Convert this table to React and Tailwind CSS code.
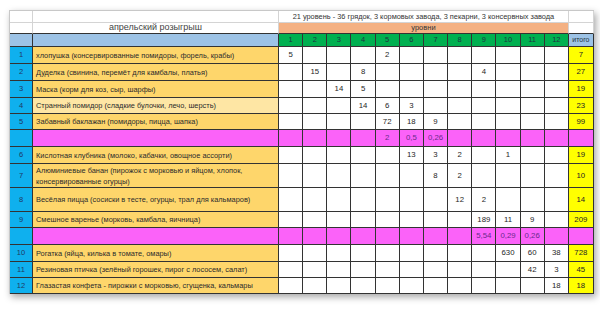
import React from 'react'

const levels = [1, 2, 3, 4, 5, 6, 7, 8, 9, 10, 11, 12]

const rows = [
  { n: 1, name: 'хлопушка (консервированные помидоры, форель, крабы)', v: { 1: '5', 5: '2' }, total: '7' },
  { n: 2, name: 'Дуделка (свинина, перемёт для камбалы, платья)', v: { 2: '15', 4: '8', 9: '4' }, total: '27' },
  { n: 3, name: 'Маска (корм для коз, сыр, шарфы)', v: { 3: '14', 4: '5' }, total: '19' },
  { n: 4, name: 'Странный помидор (сладкие булочки, лечо, шерсть)', v: { 4: '14', 5: '6', 6: '3' }, total: '23', light: true },
  { n: 5, name: 'Забавный баклажан (помидоры, пицца, шапка)', v: { 5: '72', 6: '18', 7: '9' }, total: '99' },
  { pink: true, v: { 5: '2', 6: '0,5', 7: '0,26' } },
  { n: 6, name: 'Кислотная клубника  (молоко, кабачки, овощное ассорти)', v: { 6: '13', 7: '3', 8: '2', 10: '1' }, total: '19' },
  { n: 7, name: ['Алюминиевые банан (пирожок с морковью и яйцом, хлопок,', 'консервированные огурцы)'], v: { 7: '8', 8: '2' }, total: '10' },
  { n: 8, name: 'Весёлая пицца (сосиски в тесте, огурцы, трал для кальмаров)', v: { 8: '12', 9: '2' }, total: '14' },
  { n: 9, name: 'Смешное варенье  (морковь, камбала, яичница)', v: { 9: '189', 10: '11', 11: '9' }, total: '209' },
  { pink: true, v: { 9: '5,54', 10: '0,29', 11: '0,26' } },
  { n: 10, name: 'Рогатка  (яйца, килька в томате, омары)', v: { 10: '630', 11: '60', 12: '38' }, total: '728' },
  { n: 11, name: 'Резиновая птичка (зелёный горошек, пирог с лососем, салат)', v: { 11: '42', 12: '3' }, total: '45' },
  { n: 12, name: 'Глазастая конфета - пирожки с морковью, сгущенка, кальмары', v: { 12: '18' }, total: '18' },
]

function Cell({ className = '', children }) {
  return (
    <div className={`flex items-center border-r border-b overflow-hidden whitespace-nowrap ${className}`}>
      {children}
    </div>
  )
}

export default function App() {
  return (
    <div className="w-[600px] h-[312px] bg-white pt-[10px] pl-[9px] font-['Liberation_Sans',Arial,sans-serif] text-[#262626]">
      <div className="grid w-[585px] grid-cols-[23px_246px_repeat(12,24.17px)_25px] grid-rows-[12px_11px_13px_17px_17px_17px_16px_16px_17px_17px_24px_24px_16px_17px_17px_16px_16px] border-l border-t border-[#c8c8c8] bg-white shadow-[2px_3px_7px_rgba(0,0,0,0.35)]">
        {/* row 0 */}
        <Cell className="border-[#d4d4d4]" />
        <Cell className="border-[#d4d4d4]" />
        <Cell className="col-span-12 justify-center border-[#d4d4d4] text-[7.4px] text-[#333]">
          21 уровень - 36 грядок, 3 кормовых завода, 3 пекарни, 3 консервных завода
        </Cell>
        <Cell className="border-[#d4d4d4]" />

        {/* row 1 */}
        <Cell className="border-[#d4d4d4] border-b-[#333]" />
        <Cell className="justify-center border-[#d4d4d4] border-b-[#333] text-[9px] text-[#444]">апрельский розыгрыш</Cell>
        <Cell className="col-span-12 justify-center bg-[#f4b183] border-[#d4d4d4] border-b-[#333] text-[7.5px] text-[#333]">уровни</Cell>
        <Cell className="border-[#d4d4d4] border-b-[#333]" />

        {/* row 2 */}
        <Cell className="bg-[#9dc3e6] border-[#333]" />
        <Cell className="bg-[#9dc3e6] border-[#333]" />
        {levels.map(l => (
          <Cell key={l} className="justify-center bg-[#00b050] border-[#333] text-[7.5px] text-[#1f3340]">{l}</Cell>
        ))}
        <Cell className="justify-center bg-[#9dc3e6] border-[#333] text-[7px] text-[#1f3340]">итого</Cell>

        {rows.map((r, i) => (
          <React.Fragment key={i}>
            <Cell className="justify-center bg-[#0fb0ee] border-[#333] text-[7.5px] text-[#1f3864]">{r.n}</Cell>
            {r.pink ? (
              <Cell className="bg-[#fb62f9] border-[#333]" />
            ) : (
              <Cell className={`${r.light ? 'bg-[#fee6a4]' : 'bg-[#fed66b]'} border-[#333] pl-[3px] text-[7.4px] leading-[11px] text-[#2b2b2b]`}>
                {Array.isArray(r.name) ? (
                  <div>{r.name[0]}<br />{r.name[1]}</div>
                ) : r.name}
              </Cell>
            )}
            {levels.map(l => (
              <Cell key={l} className={`justify-center border-[#333] text-[7.8px] ${r.pink ? 'bg-[#fb62f9] text-[#6a2a8c]' : 'bg-white text-[#262626]'}`}>
                {r.v[l]}
              </Cell>
            ))}
            <Cell className={`justify-center border-[#333] text-[7.8px] ${r.pink ? 'bg-[#fb62f9]' : 'bg-[#ffff00]'}`}>{r.total}</Cell>
          </React.Fragment>
        ))}
      </div>
    </div>
  )
}
